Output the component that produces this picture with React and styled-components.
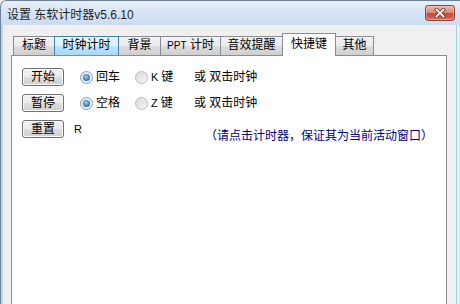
import React from 'react';
import styled, { createGlobalStyle } from 'styled-components';

const GlobalStyle = createGlobalStyle`
  html, body { margin: 0; padding: 0; }
  body {
    width: 460px; height: 304px; overflow: hidden; background: #f0f0f0;
    font-family: "Liberation Sans", "Noto Sans CJK SC", sans-serif;
  }
`;

const Window = styled.div`
  width: 460px; height: 304px; display: flex; flex-direction: column; overflow: hidden;
  border-top-left-radius: 6px;
`;

const TitleBar = styled.div`
  height: 25px; flex: none; box-sizing: border-box; display: flex; align-items: flex-start;
  border-top: 1px solid #6f829b; border-left: 1px solid #6f829b;
  border-top-left-radius: 6px;
  padding: 0 5px 0 6px;
  background: linear-gradient(#e7eff9, #d6e3f4 55%, #cbdbf0);
`;

const Title = styled.div`
  margin-top: 6px; font-size: 12px; line-height: 16px; color: #1e1e1e;
`;

const CloseButton = styled.div`
  margin-left: auto; margin-top: 4px; width: 30px; height: 16px; box-sizing: border-box;
  border: 1px solid #8b4336; border-radius: 3px;
  background: linear-gradient(#ebb4a6 0%, #dd8d7b 45%, #c8462e 55%, #d8735d 100%);
  box-shadow: inset 0 0 0 1px rgba(255, 255, 255, 0.3);
  display: flex; align-items: center; justify-content: center;
`;

const Body = styled.div`
  flex: 1; display: flex; border-left: 1px solid #6f829b; padding: 0 4px 0 2px;
  background: linear-gradient(to right, #c2d4eb 0, #c2d4eb 2px, #a3d5e8 2px, #a3d5e8 456px, #e2f1f8 456px);
`;

const Client = styled.div`
  flex: 1; display: flex; flex-direction: column; background: #f0f0f0;
  padding: 8px 9px 0 8px;
`;

const TabStrip = styled.div`
  height: 22px; flex: none; display: flex; align-items: flex-end; padding-left: 2px;
`;

const Tab = styled.div`
  position: relative; box-sizing: border-box; flex: none;
  width: ${p => p.$w + 1}px; margin-right: -1px;
  height: ${p => (p.$active ? 23 : 19)}px;
  margin-bottom: ${p => (p.$active ? -1 : 0)}px;
  z-index: ${p => (p.$active ? 2 : p.$hover ? 1 : 0)};
  border: 1px solid ${p => (p.$hover ? '#3c7fb1' : '#898c95')}; border-bottom: none;
  background: ${p =>
    p.$active
      ? '#ffffff'
      : p.$hover
      ? 'linear-gradient(#eaf6fd, #d9effc 50%, #bee6fd 51%, #a7d9f5)'
      : 'linear-gradient(#f2f2f2, #ebebeb 50%, #dddddd 51%, #cfcfcf)'};
  font-size: 12px; line-height: ${p => (p.$active ? 21 : 17)}px; text-align: center; color: #000;
  white-space: nowrap;
`;

const Panel = styled.div`
  flex: 1; background: #fff; border: 1px solid #898c95; border-bottom: none;
  padding: 12px 13px 0 10px; display: flex; flex-direction: column; gap: 8px;
`;

const Row = styled.div`
  display: flex; align-items: center; height: 18px;
`;

const NoteRow = styled(Row)`
  align-items: flex-start; height: auto;
`;

const Button = styled.div`
  width: 42px; height: 18px; box-sizing: border-box; flex: none;
  border: 1px solid #707070; border-radius: 3px;
  background: linear-gradient(#f2f2f2 0%, #ebebeb 50%, #dddddd 51%, #cfcfcf 100%);
  box-shadow: inset 0 0 0 1px #fbfbfb;
  font-size: 12px; line-height: 16px; text-align: center; color: #000;
`;

const RadioOption = styled.div`
  display: flex; align-items: center; flex: none;
  width: ${p => p.$w}px; margin-left: ${p => p.$ml || 0}px;
  font-size: 12px; color: #000;
`;

const RadioCircle = styled.span`
  width: 13px; height: 13px; box-sizing: border-box; border-radius: 50%; flex: none;
  border: 1px solid ${p => (p.$on ? '#8a9cb0' : '#bcbcbc')};
  background: ${p => (p.$on ? 'linear-gradient(135deg, #e2e6ea, #f8f8f8)' : 'linear-gradient(135deg, #d9d9d9, #f6f6f6)')};
  display: flex; align-items: center; justify-content: center;
  &::after {
    content: ''; display: ${p => (p.$on ? 'block' : 'none')};
    width: 7px; height: 7px; border-radius: 50%;
    background: radial-gradient(circle at 45% 40%, #a6d8f7 0, #4a8fd0 45%, #173f78 100%);
  }
`;

const RadioLabel = styled.span`
  margin-left: 3px; line-height: 16px; white-space: nowrap;
`;

const Latin = styled.span`
  font-family: "Liberation Sans", sans-serif; font-size: 11px; margin-right: 3px;
`;

const Hint = styled.span`
  font-size: 12px; line-height: 16px; color: #000; white-space: nowrap;
`;

const KeyText = styled.span`
  margin-left: 10px; font-size: 11px; line-height: 18px; color: #000;
`;

const Note = styled.span`
  margin-left: auto; margin-top: 9px; font-size: 12px; line-height: 14px;
  color: #000080; white-space: nowrap;
`;

const tabs = [
  { label: '标题', w: 41 },
  { label: '时钟计时', w: 64, hover: true },
  { label: '背景', w: 42 },
  { label: <><span style={{ fontSize: 10 }}>PPT</span> 计时</>, w: 60 },
  { label: '音效提醒', w: 62 },
  { label: '快捷键', w: 53, active: true },
  { label: '其他', w: 38 },
];

function CloseIcon() {
  return (
    <svg width="12" height="10" viewBox="0 0 12 10">
      <path d="M2.5 1.5 L9.5 8.5 M9.5 1.5 L2.5 8.5" stroke="#6a2a20" strokeWidth="3.4" strokeLinecap="square" fill="none" />
      <path d="M2.5 1.5 L9.5 8.5 M9.5 1.5 L2.5 8.5" stroke="#ffffff" strokeWidth="1.9" strokeLinecap="square" fill="none" />
    </svg>
  );
}

function Radio({ on, children, w, ml }) {
  return (
    <RadioOption $w={w} $ml={ml}>
      <RadioCircle $on={on} />
      <RadioLabel>{children}</RadioLabel>
    </RadioOption>
  );
}

export default function App() {
  return (
    <>
      <GlobalStyle />
      <Window>
        <TitleBar>
          <Title>设置 东软计时器v5.6.10</Title>
          <CloseButton><CloseIcon /></CloseButton>
        </TitleBar>
        <Body>
          <Client>
            <TabStrip>
              {tabs.map((t, i) => (
                <Tab key={i} $w={t.w} $active={t.active} $hover={t.hover}>{t.label}</Tab>
              ))}
            </TabStrip>
            <Panel>
              <Row>
                <Button>开始</Button>
                <Radio on w={55} ml={16}>回车</Radio>
                <Radio w={59}><Latin>K</Latin>键</Radio>
                <Hint>或 双击时钟</Hint>
              </Row>
              <Row>
                <Button>暂停</Button>
                <Radio on w={55} ml={16}>空格</Radio>
                <Radio w={59}><Latin>Z</Latin>键</Radio>
                <Hint>或 双击时钟</Hint>
              </Row>
              <NoteRow>
                <Button>重置</Button>
                <KeyText>R</KeyText>
                <Note>（请点击计时器，保证其为当前活动窗口）</Note>
              </NoteRow>
            </Panel>
          </Client>
        </Body>
      </Window>
    </>
  );
}
